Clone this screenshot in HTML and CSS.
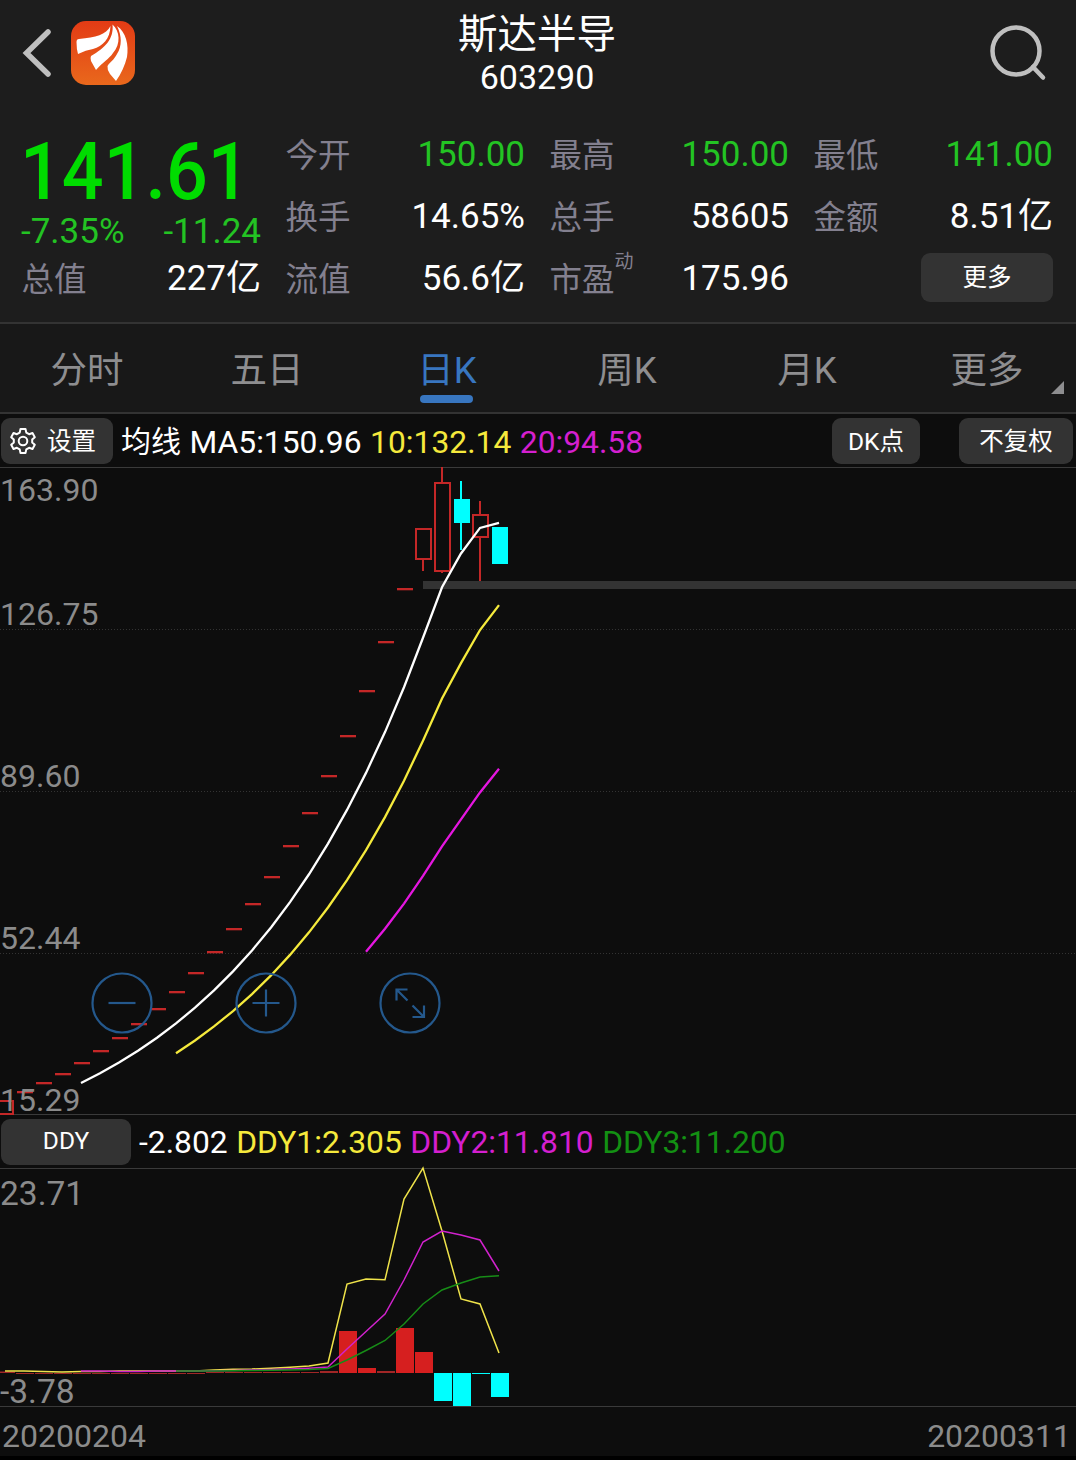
FILE: index.html
```html
<!DOCTYPE html>
<html lang="zh-CN">
<head>
    <meta charset="UTF-8">
    <meta name="viewport" content="width=device-width, initial-scale=1.0">
    <title>斯达半导 603290</title>
    <link rel="stylesheet" href="styles.css">
</head>
<body>
    <header class="header">
        <div class="header-left">
            <svg class="back" width="30" height="52" viewBox="0 0 30 52"><path d="M26 5 L4.500 26 L26 47"/></svg>
            <svg class="logo" width="64" height="64" viewBox="0 0 64 64">
                <defs>
                    <linearGradient id="logoBg" x1="0" y1="0" x2="0" y2="1">
                        <stop offset="0" stop-color="#e33b15"/>
                        <stop offset="1" stop-color="#e9681c"/>
                    </linearGradient>
                </defs>
                <rect width="64" height="64" rx="15" fill="url(#logoBg)"/>
                <path fill="#fff" d="M39.500 5 C35 14 25 16 8 18 Q5.500 18 5.500 21 Q5.500 28 7 33 Q15 29 22 28 C32 25 39 18 39.500 5Z"/>
                <path fill="#fff" d="M41.500 3.500 C43 18 34 27 20 35 Q19 37 20 40 L25 49 C32 41 38 38 42 32 C50 23 49 10 41.500 3.500Z"/>
                <path fill="#fff" d="M46 5 C51 15 51 25 46 33 C43 39 39 41 36.500 45 Q36 49 39 53 L45 60 C50 53 54 44 56 36 C58 24 55 11 46 5Z"/>
            </svg>
        </div>
        <div class="title">
            <h1>斯达半导</h1>
            <p>603290</p>
        </div>
        <div class="header-right">
            <svg class="search" width="60" height="60" viewBox="0 0 60 60"><circle cx="28" cy="28" r="23.500"/><path d="M45 44 L55 54.500"/></svg>
        </div>
    </header>

    <section class="quote">
        <div class="summary">
            <div class="price">141.61</div>
            <div class="change"><span>-7.35%</span><span>-11.24</span></div>
            <div class="cell"><label>总值</label><span>227亿</span></div>
        </div>
        <div class="stats">
            <div class="cell"><label>今开</label><span class="down">150.00</span></div>
            <div class="cell"><label>最高</label><span class="down">150.00</span></div>
            <div class="cell"><label>最低</label><span class="down">141.00</span></div>
            <div class="cell"><label>换手</label><span>14.65%</span></div>
            <div class="cell"><label>总手</label><span>58605</span></div>
            <div class="cell"><label>金额</label><span>8.51亿</span></div>
            <div class="cell"><label>流值</label><span>56.6亿</span></div>
            <div class="cell"><label>市盈<sup>动</sup></label><span>175.96</span></div>
            <div class="cell cell-more"><button class="btn btn-more">更多</button></div>
        </div>
    </section>

    <nav class="tabs">
        <a class="tab">分时</a>
        <a class="tab">五日</a>
        <a class="tab active">日K</a>
        <a class="tab">周K</a>
        <a class="tab">月K</a>
        <a class="tab tab-more">更多</a>
    </nav>

    <div class="legend">
        <button class="btn btn-setting">
            <svg width="26" height="28" viewBox="0 0 26 28">
                <path d="M10.500 2 h5 l.8 3.600 l2.800 1.600 l3.400 -1.200 l2.300 4.200 l-2.600 2.400 v2.800 l2.600 2.400 l-2.300 4.200 l-3.400 -1.200 l-2.800 1.600 l-.8 3.600 h-5 l-.8 -3.600 l-2.800 -1.600 l-3.400 1.200 l-2.300 -4.200 l2.600 -2.400 v-2.800 l-2.600 -2.400 l2.300 -4.200 l3.400 1.200 l2.800 -1.600z"/>
                <circle cx="13" cy="14" r="4.300"/>
            </svg><span>设置</span>
        </button>
        <div class="values"><span class="name">均线</span><span>MA5:150.96</span><span class="yellow">10:132.14</span><span class="magenta">20:94.58</span></div>
        <button class="btn btn-dk">DK点</button>
        <button class="btn btn-right">不复权</button>
    </div>

    <div class="chart">
        <svg id="kline" width="1076" height="646" viewBox="0 468 1076 646">
            <g class="grid">
                <path d="M0 629.500H1076M0 791.500H1076M0 953.500H1076"/>
            </g>
            <rect x="423" y="581" width="653" height="8" fill="#333"/>
            <g id="candles"></g>
            <g class="axis">
                <text x="0" y="501">163.90</text>
                <text x="0" y="625">126.75</text>
                <text x="0" y="787">89.60</text>
                <text x="0" y="949">52.44</text>
                <text x="0" y="1111">15.29</text>
            </g>
            <g id="averages"></g>
            <g class="tools">
                <circle cx="122" cy="1003" r="29.500"/>
                <path d="M108.500 1003h27"/>
                <circle cx="266" cy="1003" r="29.500"/>
                <path d="M252.500 1003h27M266 989.500v27"/>
                <circle cx="410" cy="1003" r="29.500"/>
                <path d="M407.500 989.500h-11v11M396.500 989.500l11 11M412.500 1017h11.500v-11.500M424 1017l-11.500 -11.500"/>
            </g>
        </svg>
    </div>

    <div class="legend legend-ddy">
        <button class="btn btn-ddy">DDY</button>
        <div class="values"><span>-2.802</span><span class="yellow">DDY1:2.305</span><span class="magenta">DDY2:11.810</span><span class="green">DDY3:11.200</span></div>
    </div>

    <div class="chart chart-ddy">
        <svg width="1076" height="237" viewBox="0 1169 1076 237">
            <g id="bars"></g>
            <g class="axis axis-ddy">
                <text x="0" y="1205">23.71</text>
                <text x="0" y="1403">-3.78</text>
            </g>
            <g id="ddyLines"></g>
        </svg>
    </div>

    <footer class="dates"><span>20200204</span><span>20200311</span></footer>

    <script src="chart.js"></script>
</body>
</html>
```

FILE: styles.css
```css
* {
    box-sizing: border-box;
    margin: 0;
    padding: 0;
}
body {
    width: 1076px;
    height: 1460px;
    overflow: hidden;
    background: #000;
    color: #fff;
    font-family: Roboto, "Noto Sans CJK SC", sans-serif;
}
svg {
    display: block;
    overflow: visible;
}
.header {
    display: grid;
    grid-template-columns: 1fr auto 1fr;
    height: 123px;
    background: #1d1d1d;
}
.header-left {
    display: flex;
    padding: 21px 0 0 22px;
}
.back {
    margin: 6px 19px 0 0;
}
.back path {
    fill: none;
    stroke: #bfbfbf;
    stroke-width: 5.5;
    stroke-linecap: round;
}
.title {
    text-align: center;
    padding: 8px 2px 0 0;
}
.title h1 {
    font-size: 39.5px;
    font-weight: 400;
    line-height: 54px;
}
.title p {
    font-size: 34px;
    line-height: 30px;
}
.header-right {
    display: flex;
    justify-content: flex-end;
    padding: 23px 28px 0 0;
}
.search {
    fill: none;
    stroke: #bfbfbf;
    stroke-width: 4.5;
    stroke-linecap: round;
}
.quote {
    display: flex;
    height: 199px;
    background: #1d1d1d;
}
.summary {
    width: 261px;
    padding-left: 22px;
}
.price {
    height: 88px;
    padding-top: 9px;
    line-height: 80px;
    font-size: 80px;
    font-weight: 500;
    margin-left: -2px;
    color: #00dc00;
    transform: scaleX(0.92);
    transform-origin: left;
}
.change {
    display: flex;
    justify-content: space-between;
    height: 37px;
    padding-top: 4px;
    line-height: 34px;
    font-size: 35px;
    color: #23c323;
    margin-left: -1px;
}
.stats {
    display: grid;
    grid-template-columns: repeat(3, 239px);
    grid-auto-rows: 62px;
    column-gap: 25px;
    margin-left: 25px;
    padding-top: 1px;
}
.cell {
    display: flex;
    justify-content: space-between;
    height: 62px;
    line-height: 62px;
    font-size: 35px;
}
.cell label {
    color: #83808f;
    font-size: 32.5px;
    padding-top: 1px;
    margin-left: -0.5px;
}
.cell sup {
    position: relative;
    top: -23px;
    font-size: 19px;
    line-height: 0;
    vertical-align: baseline;
}
.cell .down {
    color: #23c323;
}
.cell-more {
    justify-content: flex-end;
    align-items: center;
}
.btn {
    border: none;
    border-radius: 9px;
    background: #333;
    color: #fff;
    font-family: inherit;
    font-size: 24.5px;
}
.btn-more {
    width: 132px;
    height: 49px;
    padding-bottom: 4px;
    margin-bottom: 3px;
}
.tabs {
    display: flex;
    height: 92px;
    background: #181818;
    border-top: 2px solid #333;
    border-bottom: 2px solid #333;
}
.tab {
    position: relative;
    flex: none;
    width: 180px;
    padding-right: 6px;
    text-align: center;
    font-size: 36.5px;
    line-height: 94px;
    height: 88px;
    color: #8e8e90;
}
.tab.active {
    color: #3876c0;
}
.tab.active::after {
    content: "";
    position: absolute;
    left: 60px;
    bottom: 9px;
    width: 53px;
    height: 8px;
    border-radius: 4px;
    background: #3876c0;
}
.tab-more::after {
    content: "";
    position: absolute;
    left: 151px;
    bottom: 18px;
    border-left: 13px solid transparent;
    border-bottom: 13px solid #8e8e90;
}
.legend {
    display: flex;
    height: 54px;
    padding: 4px 3px 0 1px;
    background: #0d0d0d;
    border-bottom: 1px solid #3a3a3a;
}
.legend .btn {
    height: 46px;
    padding-bottom: 3px;
}
.legend .btn-setting {
    display: flex;
    align-items: center;
    width: 112px;
    padding: 0 0 0 9px;
    gap: 11px;
}
.btn-setting svg {
    fill: none;
    stroke: #fff;
    stroke-width: 2;
    stroke-linejoin: round;
}
.btn-setting span {
    padding-bottom: 3px;
}
.values {
    display: flex;
    flex: 1;
    gap: 8.500px;
    padding-left: 8px;
    font-size: 31.8px;
    line-height: 48px;
    white-space: nowrap;
}
.values .name {
    font-size: 30px;
}
.yellow {
    color: #f5e93c;
}
.magenta {
    color: #d41fcf;
}
.green {
    color: #139013;
}
.btn-dk {
    width: 88px;
    margin-right: 39px;
}
.btn-right {
    width: 114px;
}
.btn-ddy {
    width: 130px;
}
.chart {
    background: #0d0d0d;
}
.grid path {
    stroke: #333;
    stroke-width: 1;
    stroke-dasharray: 1 2;
}
.axis text {
    fill: #8b8b8b;
    font-size: 32px;
}
.axis-ddy text {
    font-size: 33.5px;
}
.tools {
    fill: none;
    stroke: #24588c;
    stroke-width: 2.2;
}
.legend-ddy {
    height: 55px;
    border-top: 1px solid #3a3a3a;
}
.legend-ddy .values {
    line-height: 46px;
}
.dates {
    display: flex;
    justify-content: space-between;
    height: 50px;
    padding: 0 5px 0 2px;
    background: #0d0d0d;
    border-top: 1px solid #3a3a3a;
    color: #8b8b8b;
    font-size: 32px;
    line-height: 58px;
}
```

FILE: chart.js
```js
const NS = 'http://www.w3.org/2000/svg';
const RED = '#c42727';
const CYAN = '#00ffff';

// [open, close, high, low], one-price limit-up days only have a close
const days = [
    [15.29, 18.35, 18.35, 15.29],
    20.19, 22.21, 24.43, 26.87, 29.56, 32.52, 35.77, 39.35, 43.29, 47.62,
    52.38, 57.62, 63.38, 69.72, 76.69, 84.36, 92.80, 102.08, 112.29, 123.52, 135.87,
    [142.75, 149.60, 149.60, 140.00],
    [140.00, 160.15, 163.90, 139.60],
    [156.55, 151.05, 160.70, 144.90],
    [147.90, 152.85, 156.10, 137.70],
    [150.10, 141.61, 150.10, 141.61]
];
const closes = days.map(d => Array.isArray(d) ? d[1] : d);

const xAt = i => 5 + i * 19;
const yAt = price => 467 + (163.90 - price) * 647 / 148.61;

function add(parent, tag, attrs) {
    const el = document.createElementNS(NS, tag);
    for (const key in attrs) {
        el.setAttribute(key, attrs[key]);
    }
    document.getElementById(parent).appendChild(el);
}

// Candles
days.forEach((d, i) => {
    const x = xAt(i);
    if (!Array.isArray(d)) {
        add('candles', 'rect', { x: x - 7, y: Math.floor(yAt(d)) - 1, width: 16, height: 2.3, fill: RED });
        return;
    }
    const [open, close, high, low] = d.map(p => Math.round(yAt(p)));
    const top = Math.min(open, close);
    const bottom = Math.max(open, close);
    const color = close < open ? RED : CYAN;
    add('candles', 'path', { d: `M${x} ${high}V${top}M${x} ${bottom}V${low}`, stroke: color, 'stroke-width': 2 });
    if (close < open) {
        add('candles', 'rect', { x: x - 7, y: top, width: 15, height: bottom - top, fill: 'none', stroke: RED, 'stroke-width': 2 });
    } else {
        add('candles', 'rect', { x: x - 7, y: top, width: 16, height: bottom - top, fill: CYAN });
    }
});

// Moving averages
function drawAverage(n, color) {
    const points = [];
    for (let i = n - 1; i < closes.length; i++) {
        const sum = closes.slice(i - n + 1, i + 1).reduce((a, b) => a + b, 0);
        points.push(`${xAt(i)},${yAt(sum / n)}`);
    }
    add('averages', 'polyline', { points: points.join(' '), fill: 'none', stroke: color, 'stroke-width': 2.3 });
}
drawAverage(5, '#ffffff');
drawAverage(10, '#f5ea3c');
drawAverage(20, '#e516e0');

// DDY bars, heights from the zero line
const zero = 1373;
const bars = [1.5, -1, -1, -1, -1, -1, -1, -1, -1, -1, -1, 1, 1, 1, 1, 1, 1, 2, 42, 5, 2, 45, 21, -28, -33, -1, -24];
bars.forEach((h, i) => {
    const down = i > 22;
    add('bars', 'rect', {
        x: xAt(i) - 8,
        y: h > 0 ? zero - h : zero,
        width: 18,
        height: Math.abs(h),
        fill: down ? CYAN : (Math.abs(h) < 3 ? '#a12626' : '#d61f1f')
    });
});

function drawLine(start, ys, color) {
    const points = ys.map((y, i) => `${xAt(start + i)},${y}`).join(' ');
    add('ddyLines', 'polyline', { points: points, fill: 'none', stroke: color, 'stroke-width': 1.5 });
}
drawLine(0, [1371, 1371, 1371.5, 1372, 1371.5, 1371.5, 1371, 1371, 1371, 1371, 1371, 1370, 1369.2, 1369, 1368.2, 1367.3, 1366, 1363,
    1284, 1279, 1279.7, 1199, 1168, 1231, 1299, 1304, 1353], '#efe34a');
drawLine(4, [1371, 1371, 1371.5, 1371.5, 1371, 1371, 1371, 1370.7, 1370.4, 1370, 1369.4, 1369, 1368.2, 1367,
    1349, 1331.5, 1314, 1280, 1242, 1231, 1235, 1240, 1271], '#d122cd');
drawLine(9, [1371, 1371, 1371, 1370.7, 1370.5, 1370.2, 1370, 1369.6, 1368.5,
    1360, 1350.5, 1340.5, 1324, 1304, 1290, 1283, 1277, 1275.7], '#178c17');
```
